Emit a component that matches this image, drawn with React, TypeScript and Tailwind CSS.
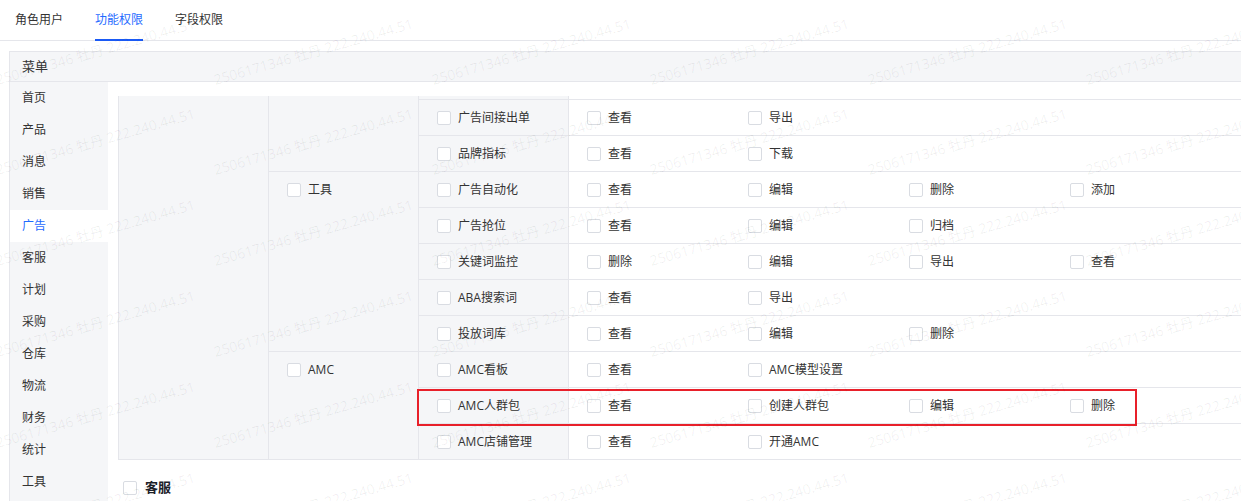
import React from "react";

const FONT = "font-['Open_Sans','Noto_Sans_CJK_SC',sans-serif]";

function Box() {
  return <span className="inline-block w-[14px] h-[14px] shrink-0 rounded-[2px] border border-[#d9dce2] bg-white" />;
}

function Check({ label, bold }: { label: string; bold?: boolean }) {
  return (
    <div className="flex items-center gap-[7px] whitespace-nowrap">
      <Box />
      <span className={bold ? "text-[13px] font-bold text-[#1d2129]" : "text-[12px] text-[#333]"}>{label}</span>
    </div>
  );
}

type RowDef = { name: string; actions: string[]; hl?: boolean };

function Row({ row, top }: { row: RowDef; top: boolean }) {
  return (
    <div className={"relative flex border-[#e5e6eb] " + (top ? "h-[36px] border-t" : "h-[35px]")}>
      <div className="w-[150px] shrink-0 flex items-center pl-[18px] bg-[#f5f6f8] border-r border-[#e5e6eb]">
        <Check label={row.name} />
      </div>
      <div className="flex-1 flex items-center pl-[18px] bg-white">
        {row.actions.map((a, i) => (
          <div key={i} className="w-[161px] shrink-0">
            <Check label={a} />
          </div>
        ))}
      </div>
      {row.hl && (
        <div className="absolute z-10 left-[-2px] top-[1px] w-[720px] h-[37px] border-2 border-[#e8202a] pointer-events-none" />
      )}
    </div>
  );
}

function Group({ label, rows, strip, border }: { label?: string; rows: RowDef[]; strip?: boolean; border?: boolean }) {
  return (
    <div className={"flex " + (border ? "border-t border-[#e5e6eb]" : "")}>
      <div className="w-[150px] shrink-0 bg-[#f5f6f8] border-r border-[#e5e6eb]">
        {label && (
          <div className="h-[35px] flex items-center pl-[18px]">
            <Check label={label} />
          </div>
        )}
      </div>
      <div className="flex-1 flex flex-col">
        {strip && (
          <div className="flex h-[3px]">
            <div className="w-[150px] shrink-0 bg-[#f5f6f8] border-r border-[#e5e6eb]" />
            <div className="flex-1 bg-white" />
          </div>
        )}
        {rows.map((r, i) => (
          <Row key={i} row={r} top={strip ? true : i > 0} />
        ))}
      </div>
    </div>
  );
}

const side = ["首页", "产品", "消息", "销售", "广告", "客服", "计划", "采购", "仓库", "物流", "财务", "统计", "工具"];

const wmX = [-2, 216, 434, 652, 870, 1088];
const wmY = [87, 177, 268, 359, 450, 541];

export default function App() {
  return (
    <div className={"relative w-[1241px] h-[501px] overflow-hidden bg-white " + FONT}>
      {/* tabs */}
      <div className="flex h-[41px] border-b border-[#e5e6eb] pl-[15px] gap-[32px]">
        <div className="flex items-center text-[12px] text-[#333]">角色用户</div>
        <div className="flex items-center text-[12px] text-[#1f6bff] border-b-2 border-[#1a5af5] -mb-px pt-[1px]">功能权限</div>
        <div className="flex items-center text-[12px] text-[#333]">字段权限</div>
      </div>

      {/* panel */}
      <div className="mt-[10px] ml-[9px] w-[1240px] border border-[#e5e6eb]">
        <div className="h-[30px] flex items-center pl-[12px] bg-[#f5f6f8] border-b border-[#e5e6eb] text-[13px] text-[#333]">
          菜单
        </div>
        <div className="flex">
          <div className="w-[98px] shrink-0 bg-[#f5f6f8] flex flex-col">
            {side.map((s) => (
              <div
                key={s}
                className={
                  "h-[32px] flex items-center pl-[12px] text-[12px] " +
                  (s === "广告" ? "bg-white text-[#1f6bff]" : "text-[#333]")
                }
              >
                {s}
              </div>
            ))}
          </div>
          <div className="flex-1 pl-[10px] pt-[14px] flex flex-col">
            <div className="flex border-l border-b border-[#e5e6eb]">
              <div className="w-[150px] shrink-0 bg-[#f5f6f8] border-r border-[#e5e6eb]" />
              <div className="flex-1 flex flex-col">
                <Group
                  strip
                  rows={[
                    { name: "广告间接出单", actions: ["查看", "导出"] },
                    { name: "品牌指标", actions: ["查看", "下载"] },
                  ]}
                />
                <Group
                  border
                  label="工具"
                  rows={[
                    { name: "广告自动化", actions: ["查看", "编辑", "删除", "添加"] },
                    { name: "广告抢位", actions: ["查看", "编辑", "归档"] },
                    { name: "关键词监控", actions: ["删除", "编辑", "导出", "查看"] },
                    { name: "ABA搜索词", actions: ["查看", "导出"] },
                    { name: "投放词库", actions: ["查看", "编辑", "删除"] },
                  ]}
                />
                <Group
                  border
                  label="AMC"
                  rows={[
                    { name: "AMC看板", actions: ["查看", "AMC模型设置"] },
                    { name: "AMC人群包", actions: ["查看", "创建人群包", "编辑", "删除"], hl: true },
                    { name: "AMC店铺管理", actions: ["查看", "开通AMC"] },
                  ]}
                />
              </div>
            </div>
            <div className="mt-[20px] h-[16px] flex items-center pl-[5px]">
              <div className="flex items-center gap-[8px]">
                <Box />
                <span className="text-[13px] font-bold text-[#1d2129]">客服</span>
              </div>
            </div>
            <div className="h-[40px]" />
          </div>
        </div>
      </div>

      {/* watermark overlay */}
      <div className="absolute inset-0 z-20 pointer-events-none">
        {wmY.map((y) =>
          wmX.map((x) => (
            <span
              key={x + "-" + y}
              className="absolute whitespace-nowrap text-[14px] leading-[14px] text-[rgba(0,0,0,0.065)] origin-bottom-left -rotate-[16deg]"
              style={{ left: x, top: y - 14 }}
            >
              2506171346 牡丹 222.240.44.51
            </span>
          ))
        )}
      </div>
    </div>
  );
}
